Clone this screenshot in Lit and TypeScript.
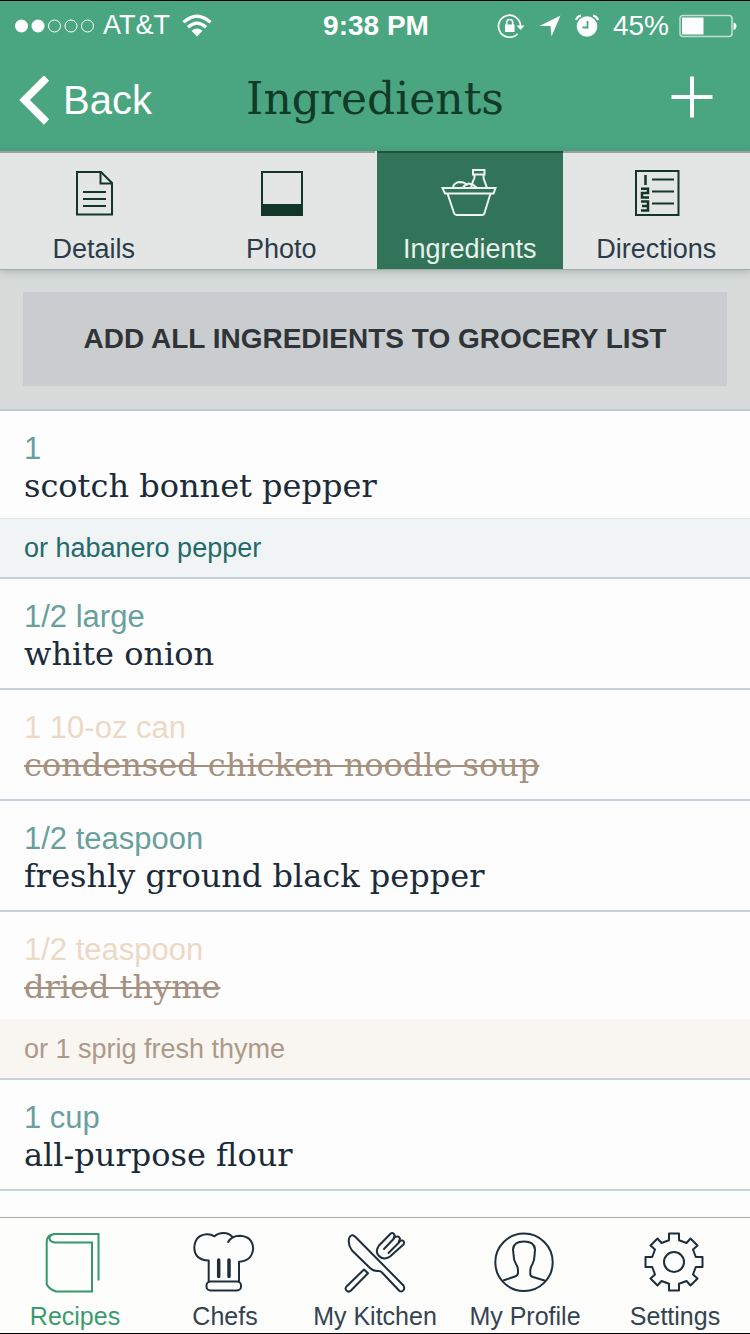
import { LitElement, html, svg, css, nothing } from "lit";
import { customElement, state } from "lit/decorators.js";
import { classMap } from "lit/directives/class-map.js";

interface Ingredient {
  quantity: string;
  name: string;
  alternative?: string;
  done?: boolean;
}

const sectionTabs = [
  {
    label: "Details",
    icon: svg`
      <path d="M15 4H39L50 15V46.500H15Z" />
      <path d="M38.500 4V15.500H50" />
      <path d="M21 24H44M21 31H44M21 38H44" />`,
  },
  {
    label: "Photo",
    icon: svg`
      <path d="M13 4H53V47H13Z" />
      <path class="solid" d="M12 36H54V48H12Z" />`,
  },
  {
    label: "Ingredients",
    icon: svg`
      <path d="M4.500 20H57.500L55.500 25.500H7L4.500 20Z" />
      <path d="M9.500 25.500L16 45Q16.700 47 18.500 47H44Q46 47 46.500 45L52.500 25.500" />
      <path d="M35 2H46.500V6.500H35Z" />
      <path d="M36.500 6.500V9Q36.500 11 35 13L33 20M45.500 6.500V9Q45.500 11 46.500 13L49 20" />
      <path d="M15 19.500Q15.500 15 21.500 14Q27 14 29.500 17.500M25 19.500Q27 16 31 15.500Q35 16 38.500 19.500" />`,
  },
  {
    label: "Directions",
    icon: svg`
      <path d="M12 3H54.500V47H12Z" />
      <path d="M28 11.500H50M28 23.500H50M28 35.500H50" />
      <path class="numeral" d="M21.500 7V17M17 20.800H24V25H18V29.500H25M17 33.500H24V42.500H17M18 38H24" />`,
  },
];

const mainTabs = [
  {
    label: "Recipes",
    icon: svg`<path d="M58.500 51.500V5H16Q6.700 5 6.700 13V55Q9 60.500 16 62.500H52V13.500H15Q10 13 9.500 9.500Q9.700 5.500 15 5" />`,
  },
  {
    label: "Chefs",
    icon: svg`
      <path d="M18.700 52V31.500Q4.500 31 4.300 18.500Q5 6 17 5.300Q21 5.200 24.500 7.300Q28 4 33.500 4Q39 4 42.500 8" />
      <path d="M38.200 13Q41.500 6.700 50 6.700Q62.500 7.500 63.200 19.500Q62 32 49 32.700V52" />
      <rect x="16.500" y="52.500" width="34.500" height="9" rx="4" />
      <path class="bar" d="M28.700 31V47.500M39 31V47.500" />`,
  },
  {
    label: "My Kitchen",
    icon: svg`
      <path d="M15 7.500L63.500 56.500Q64.500 58 64 60.500Q62 63.500 59.500 62L42 43.500Q40.500 41.700 38 42Q33.500 42.500 30 39L12 21.500Q7.500 15.500 9.200 9Q11 4.500 15 7.500Z" />
      <path d="M24 40.500L6.500 57.500Q4.500 60 7 62Q9 63.500 11 61.500L28 44.200Z" />
      <path d="M50.500 4.700L39 16.500Q35 22 38.500 26.500Q43.500 32 50 27.500L63.500 15.500Q65 12.500 62.500 11.500Q60.500 11 58.700 12.700Q61 9.500 59 8Q57 6.500 53.700 8.700Q55.500 6 53.500 4.500Q52 3.500 50.500 4.700Z" />
      <path d="M44 20L54 9.500M48.500 24L59.500 13" />`,
  },
  {
    label: "My Profile",
    icon: svg`
      <circle cx="34" cy="33.300" r="28.700" />
      <path d="M14 51.200L25 47.500Q28 46.500 28 43.500V41Q28 38 26 35Q23.500 31 23.700 27L23 20.500Q23.500 12.500 34 12.500Q44.500 12.500 45 20.500L44.500 27Q44.500 31 42.500 35Q40.500 38 40.300 41V45Q40 47 43 48L54.500 51.500" />`,
  },
  {
    label: "Settings",
    icon: svg`
      <circle cx="34" cy="33" r="10" />
      <path transform="translate(34 33)" d="M-5 -21.800V-28.500H5V-21.800L12.500 -19L16.500 -23.500L23.500 -16.500L19 -12.500L21.800 -5H28.500V5H21.800L19 12.500L23.500 16.500L16.500 23.500L12.500 19L5 21.800V28.500H-5V21.800L-12.500 19L-16.500 23.500L-23.500 16.500L-19 12.500L-21.800 5H-28.500V-5H-21.800L-19 -12.500L-23.500 -16.500L-16.500 -23.500L-12.500 -19Z" />`,
  },
];

@customElement("status-bar")
class StatusBar extends LitElement {
  static styles = css`
    :host {
      display: grid;
      grid-template-columns: 1fr auto 1fr;
      align-items: center;
      height: 49px;
      padding: 0 13px 0 15px;
      color: #fff;
      font-size: 28px;
    }
    svg { display: block; flex: none; }
    .group { display: flex; align-items: center; }
    .carrier { font-size: 27px; margin: 0 12px 0 8px; }
    .time { font-weight: 700; }
    .right { justify-content: flex-end; gap: 14px; }
    .power { display: flex; align-items: center; gap: 10px; }
  `;

  render() {
    return html`
      <div class="group">
        <svg width="80" height="24" viewBox="0 0 80 24" role="img" aria-label="Signal: two of five">
          <circle cx="6.500" cy="12" r="6.500" fill="#fff" />
          <circle cx="23" cy="12" r="6.500" fill="#fff" />
          <g fill="none" stroke="#fff" stroke-width="1">
            <circle cx="39.500" cy="12" r="6" />
            <circle cx="56" cy="12" r="6" />
            <circle cx="72.500" cy="12" r="6" />
          </g>
        </svg>
        <span class="carrier">AT&amp;T</span>
        <svg width="30" height="24" viewBox="0 0 30 24" role="img" aria-label="Wi-Fi">
          <g fill="none" stroke="#fff" stroke-width="3.200">
            <path d="M1.500 8.300Q15 -3.800 28.500 8.300" />
            <path d="M6 13.200Q15 5 24 13.200" />
          </g>
          <path d="M9.500 16.800Q15 12.300 20.500 16.800L15 22.500Z" fill="#fff" />
        </svg>
      </div>
      <span class="time">9:38 PM</span>
      <div class="group right">
        <svg width="28" height="24" viewBox="0 0 28 24" role="img" aria-label="Rotation locked">
          <path d="M23.500 12A11 11 0 1 0 20.500 19.800" fill="none" stroke="#fff" stroke-width="1.700" />
          <path d="M19.500 11.500H27.500L23.500 16Z" fill="#fff" />
          <path d="M8 10.500H17.500V18H8Z" fill="#fff" />
          <path d="M9.700 11V8.500Q9.700 5.500 12.700 5.500Q15.700 5.500 15.700 8.500V11" fill="none" stroke="#fff" stroke-width="1.600" />
        </svg>
        <svg width="22" height="24" viewBox="0 0 22 24" role="img" aria-label="Location in use">
          <path d="M21.500 1.500L12.500 22.500L11.500 12H0.500Z" fill="#fff" />
        </svg>
        <svg width="24" height="24" viewBox="0 0 24 24" role="img" aria-label="Alarm set">
          <circle cx="12" cy="12.500" r="10.300" fill="#fff" />
          <path d="M12.500 7V13.500H7.500" fill="none" stroke="#4aa581" stroke-width="1.800" />
          <path d="M1 6Q2 2.500 6 1.500M18 1.500Q22 2.500 23 6" fill="none" stroke="#fff" stroke-width="2" />
        </svg>
        <span class="power">
          <span>45%</span>
          <svg width="58" height="24" viewBox="0 0 58 24" aria-hidden="true">
            <rect x="1" y="1.500" width="52" height="21" rx="3" fill="none" stroke="#c4e0d5" stroke-width="1.500" />
            <rect x="3" y="3.500" width="21.500" height="17" fill="#fff" />
            <path d="M54.500 8.500Q57.500 9 57.500 12Q57.500 15 54.500 16Z" fill="#fff" />
          </svg>
        </span>
      </div>
    `;
  }
}

@customElement("ingredient-row")
class IngredientRow extends LitElement {
  static properties = { item: { attribute: false } };
  declare item: Ingredient;

  static styles = css`
    :host { display: block; border-bottom: 2px solid #c6d2da; background: #fdfdfd; }
    .main { padding: 19px 24px 16px; }
    .has-note .main { padding-bottom: 14px; }
    .quantity { margin: 0; font-size: 31px; line-height: 38px; color: #69a09e; }
    .name {
      margin: 0;
      min-height: 36px;
      font: 400 32px/36px "DejaVu Serif", serif;
      color: #1b2b39;
    }
    .note {
      margin: 0;
      padding: 0 24px;
      border-top: 1px solid #dfe6e9;
      background: #f0f4f5;
      font-size: 27px;
      line-height: 58px;
      color: #236a6b;
    }
    .done .quantity { color: #ecd9c5; }
    .done .name { color: #a5917f; text-decoration: line-through; text-decoration-thickness: 2px; }
    .done .note { color: #ad998a; background: #f9f5f1; border-color: #f9f5f1; }
  `;

  render() {
    const { quantity, name, alternative, done } = this.item;
    return html`
      <div class=${classMap({ done: !!done, "has-note": !!alternative })}>
        <div class="main">
          <p class="quantity">${quantity}</p>
          <p class="name">${name}</p>
        </div>
        ${alternative ? html`<p class="note">${alternative}</p>` : nothing}
      </div>
    `;
  }
}

@customElement("app-root")
class AppRoot extends LitElement {
  @state() private section = "Ingredients";
  @state() private area = "Recipes";

  private ingredients: Ingredient[] = [
    { quantity: "1", name: "scotch bonnet pepper", alternative: "or habanero pepper" },
    { quantity: "1/2 large", name: "white onion" },
    { quantity: "1 10-oz can", name: "condensed chicken noodle soup", done: true },
    { quantity: "1/2 teaspoon", name: "freshly ground black pepper" },
    { quantity: "1/2 teaspoon", name: "dried thyme", alternative: "or 1 sprig fresh thyme", done: true },
    { quantity: "1 cup", name: "all-purpose flour" },
    { quantity: "5", name: "" },
  ];

  static styles = css`
    :host {
      display: flex;
      flex-direction: column;
      box-sizing: border-box;
      height: 100vh;
      border: solid #000;
      border-width: 1px 0;
      background: #fdfdfd;
      font-family: "Liberation Sans", Arial, sans-serif;
    }
    button { margin: 0; padding: 0; border: 0; background: none; font: inherit; color: inherit; cursor: pointer; }
    svg { display: block; flex: none; }
    .top { flex: none; background: #4aa581; }
    .nav {
      display: grid;
      grid-template-columns: 1fr auto 1fr;
      align-items: center;
      height: 101px;
      padding: 0 19px;
    }
    .back { display: flex; align-items: center; gap: 12px; justify-self: start; color: #fff; font-size: 40px; }
    .add { justify-self: end; padding: 0 17px 8px; }
    .title { margin: 0; padding-bottom: 4px; font: 400 44px/52px "DejaVu Serif", serif; color: #123a29; }
    .tabs {
      position: relative;
      flex: none;
      display: grid;
      grid-template-columns: repeat(4, 1fr);
      border-bottom: 1px solid #9fabab;
      background: #e4e6e5;
      box-shadow: 0 2px 8px rgba(70, 90, 85, 0.3);
    }
    .tab {
      display: flex;
      flex-direction: column;
      align-items: center;
      gap: 13px;
      padding: 15px 0 2px;
      border-top: 2px solid #9d9f9e;
      font-size: 27px;
      line-height: 36px;
      color: #2c3b4a;
    }
    .tab.active { margin-left: 2px; border-top-color: #23513e; background: #327459; color: #e8f1ed; }
    .tab svg { fill: none; stroke: #123627; stroke-width: 2; }
    .tab .solid { fill: #123627; stroke: none; }
    .tab .numeral { stroke-width: 2.5; }
    .tab.active svg { stroke: #eef5f2; }
    .bulk {
      flex: none;
      display: flex;
      padding: 22px 23px 23px;
      border-bottom: 2px solid #c0cbd1;
      background: #d7dbda;
    }
    .bulk-button {
      flex: 1;
      padding: 27px 0;
      background: #c9cdd0;
      font-size: 28px;
      font-weight: 700;
      line-height: 40px;
      color: #303437;
    }
    .list { flex: 1; min-height: 0; margin: 0; overflow: hidden; }
    .dock {
      flex: none;
      display: grid;
      grid-template-columns: repeat(5, 1fr);
      border-top: 1px solid #a9abab;
      background: #fdfdfb;
    }
    .dock-item {
      display: flex;
      flex-direction: column;
      align-items: center;
      gap: 6px;
      padding: 11px 0 2px;
      font-size: 25px;
      line-height: 30px;
      color: #344352;
      white-space: nowrap;
    }
    .dock-item svg { fill: none; stroke: #1f2e3b; stroke-width: 2; stroke-linejoin: round; stroke-linecap: round; }
    .dock-item .bar { stroke-width: 3.5; }
    .dock-item.active { color: #3a9c6e; }
    .dock-item.active svg { stroke: #35996a; stroke-linejoin: miter; stroke-linecap: butt; }
  `;

  render() {
    return html`
      <header class="top">
        <status-bar></status-bar>
        <div class="nav">
          <button class="back">
            <svg width="32" height="50" viewBox="0 0 32 50" aria-hidden="true">
              <path d="M27.500 2L5.500 24L27.500 46" fill="none" stroke="#fff" stroke-width="7.500" />
            </svg>
            <span>Back</span>
          </button>
          <h1 class="title">Ingredients</h1>
          <button class="add" aria-label="Add">
            <svg width="44" height="44" viewBox="0 0 44 44" aria-hidden="true">
              <path d="M22 1.500V42.500M1.500 22H42.500" fill="none" stroke="#fff" stroke-width="4" />
            </svg>
          </button>
        </div>
      </header>
      <nav class="tabs" aria-label="Recipe sections">
        ${sectionTabs.map(
          (tab) => html`
            <button
              class=${classMap({ tab: true, active: tab.label === this.section })}
              @click=${() => (this.section = tab.label)}
            >
              <svg width="64" height="50" viewBox="0 0 64 50" aria-hidden="true">${tab.icon}</svg>
              <span>${tab.label}</span>
            </button>
          `
        )}
      </nav>
      <div class="bulk"><button class="bulk-button">ADD ALL INGREDIENTS TO GROCERY LIST</button></div>
      <main class="list">
        ${this.ingredients.map((item) => html`<ingredient-row .item=${item}></ingredient-row>`)}
      </main>
      <nav class="dock" aria-label="Main">
        ${mainTabs.map(
          (tab) => html`
            <button
              class=${classMap({ "dock-item": true, active: tab.label === this.area })}
              @click=${() => (this.area = tab.label)}
            >
              <svg width="70" height="66" viewBox="0 0 70 66" aria-hidden="true">${tab.icon}</svg>
              <span>${tab.label}</span>
            </button>
          `
        )}
      </nav>
    `;
  }
}
